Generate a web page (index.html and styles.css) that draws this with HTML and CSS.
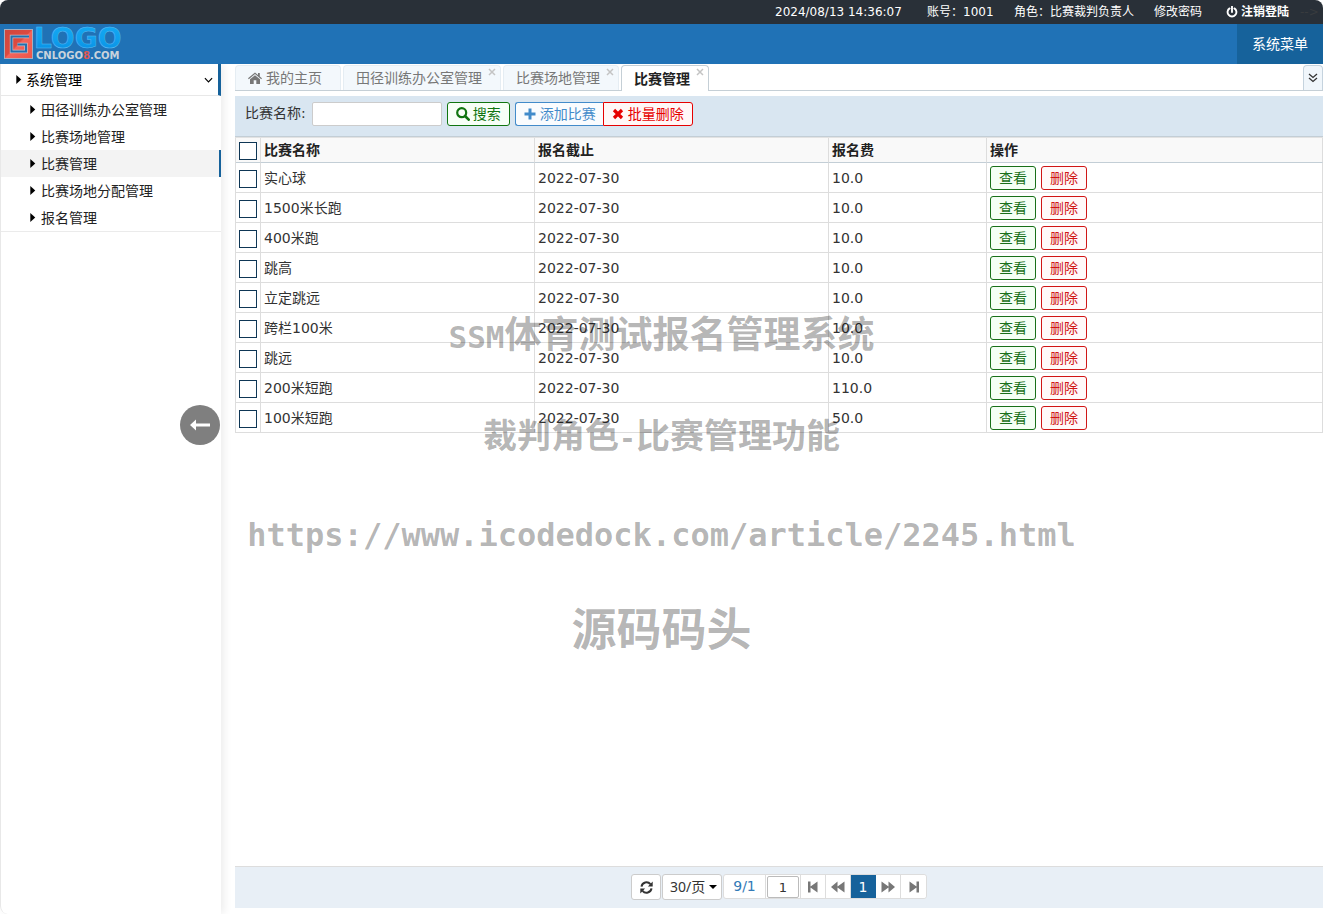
FILE: index.html
```html
<!DOCTYPE html>
<html lang="zh-CN">
<head>
<meta charset="utf-8">
<title>比赛管理</title>
<link rel="stylesheet" href="styles.css">
</head>
<body>
<svg class="defs" aria-hidden="true">
  <symbol id="caret-right" viewBox="0 0 6 10"><path d="M0 0L5.500 5L0 10Z"/></symbol>
  <symbol id="x" viewBox="0 0 8 8"><path d="M1 1L7 7M7 1L1 7" fill="none" stroke="currentColor" stroke-width="1.5"/></symbol>
</svg>
<div class="app">
  <div class="topbar">
    <span class="clock">2024/08/13 14:36:07</span>
    <span class="account">账号：1001</span>
    <span class="role">角色：比赛裁判负责人</span>
    <a class="password" href="#">修改密码</a>
    <a class="logout" href="#"><svg width="12" height="12" viewBox="0 0 12 12"><path d="M3.6 2.4A4.4 4.4 0 1 0 8.4 2.4M6 .6V6" fill="none" stroke="currentColor" stroke-width="1.9" stroke-linecap="round"/></svg>注销登陆</a>
    <span class="stray">--&gt;</span>
  </div>
  <header class="header">
    <svg class="logo" width="126" height="40" viewBox="0 0 126 40" role="img" aria-label="LOGO">
      <defs>
        <linearGradient id="blue" x1="0" y1="0" x2="0" y2="1"><stop offset="0" stop-color="#13a9f2"/><stop offset=".5" stop-color="#10a0ee"/><stop offset="1" stop-color="#078be0"/></linearGradient>
        <linearGradient id="red" x1="0" y1="0" x2="1" y2="1"><stop offset="0" stop-color="#cf463c"/><stop offset=".48" stop-color="#dd4a40"/><stop offset=".52" stop-color="#f4645b"/><stop offset="1" stop-color="#ec5549"/></linearGradient>
      </defs>
      <rect x="4.500" y="5.500" width="28" height="29" fill="url(#red)" stroke="#a4aec0"/>
      <path d="M29 12.500H11.500V27.500H26V20.500H17.500" fill="none" stroke="#c5bcc8" stroke-width="3.400"/>
      <path d="M29 12.500H11.500V27.500H26V20.500H17.500" fill="none" stroke="#2270ae" stroke-width="2"/>
      <text class="logo-name" x="34" y="24">LOGO</text>
      <text class="logo-site" x="36" y="35">CNLOGO<tspan class="logo-eight">8</tspan>.COM</text>
    </svg>
    <button class="system-menu" type="button">系统菜单</button>
  </header>
  <div class="body">
    <nav class="sidebar">
      <a class="group" href="#"><svg class="caret"><use href="#caret-right"/></svg>系统管理<svg class="chevron" width="9" height="6" viewBox="0 0 10 6"><path d="M1 1L5 5L9 1" fill="none" stroke="currentColor" stroke-width="1.300"/></svg></a>
      <ul class="items">
        <li><a href="#"><svg class="caret"><use href="#caret-right"/></svg>田径训练办公室管理</a></li>
        <li><a href="#"><svg class="caret"><use href="#caret-right"/></svg>比赛场地管理</a></li>
        <li><a class="active" href="#"><svg class="caret"><use href="#caret-right"/></svg>比赛管理</a></li>
        <li><a href="#"><svg class="caret"><use href="#caret-right"/></svg>比赛场地分配管理</a></li>
        <li><a href="#"><svg class="caret"><use href="#caret-right"/></svg>报名管理</a></li>
      </ul>
    </nav>
    <main class="main">
      <div class="tabs">
        <a class="tab" href="#"><svg class="home" width="14" height="12" viewBox="0 0 14 12"><path d="M7 .5L0 6.300L.8 7.200L7 2.100L13.200 7.200L14 6.300L11.800 4.400V1H10V2.900ZM7 3.200L2 7.300V12H5.700V8.300H8.300V12H12V7.300Z" fill="currentColor"/></svg>我的主页</a>
        <a class="tab closable" href="#">田径训练办公室管理<svg class="close"><use href="#x"/></svg></a>
        <a class="tab closable" href="#">比赛场地管理<svg class="close"><use href="#x"/></svg></a>
        <a class="tab closable current" href="#">比赛管理<svg class="close"><use href="#x"/></svg></a>
        <button class="more" type="button" aria-label="更多"><svg width="10" height="10" viewBox="0 0 10 10"><path d="M1 1L5 4.500L9 1M1 5L5 8.500L9 5" fill="none" stroke="currentColor" stroke-width="1.300"/></svg></button>
      </div>
      <form class="toolbar">
        <label for="name">比赛名称:</label>
        <input class="name" id="name" type="text">
        <button class="btn search" type="button"><svg width="14" height="14" viewBox="0 0 14 14"><circle cx="5.700" cy="5.700" r="4.500" fill="none" stroke="currentColor" stroke-width="2.200"/><path d="M9 9L12.700 12.700" stroke="currentColor" stroke-width="2.600" stroke-linecap="round"/></svg>搜索</button>
        <div class="joined">
          <button class="btn add" type="button"><svg width="12" height="12" viewBox="0 0 12 12"><path d="M6 .5V11.500M.5 6H11.500" stroke="currentColor" stroke-width="3"/></svg>添加比赛</button>
          <button class="btn remove" type="button"><svg width="12" height="12" viewBox="0 0 12 12"><path d="M2 2L10 10M10 2L2 10" stroke="currentColor" stroke-width="3.200"/></svg>批量删除</button>
        </div>
      </form>
      <table class="grid">
        <colgroup><col class="c-check"><col class="c-name"><col class="c-date"><col class="c-fee"><col></colgroup>
        <thead><tr><th><input type="checkbox" aria-label="全选"></th><th>比赛名称</th><th>报名截止</th><th>报名费</th><th>操作</th></tr></thead>
        <tbody>
          <tr><td><input type="checkbox" aria-label="实心球"></td><td>实心球</td><td>2022-07-30</td><td>10.0</td><td><button class="act view">查看</button><button class="act del">删除</button></td></tr>
          <tr><td><input type="checkbox" aria-label="1500米长跑"></td><td>1500米长跑</td><td>2022-07-30</td><td>10.0</td><td><button class="act view">查看</button><button class="act del">删除</button></td></tr>
          <tr><td><input type="checkbox" aria-label="400米跑"></td><td>400米跑</td><td>2022-07-30</td><td>10.0</td><td><button class="act view">查看</button><button class="act del">删除</button></td></tr>
          <tr><td><input type="checkbox" aria-label="跳高"></td><td>跳高</td><td>2022-07-30</td><td>10.0</td><td><button class="act view">查看</button><button class="act del">删除</button></td></tr>
          <tr><td><input type="checkbox" aria-label="立定跳远"></td><td>立定跳远</td><td>2022-07-30</td><td>10.0</td><td><button class="act view">查看</button><button class="act del">删除</button></td></tr>
          <tr><td><input type="checkbox" aria-label="跨栏100米"></td><td>跨栏100米</td><td>2022-07-30</td><td>10.0</td><td><button class="act view">查看</button><button class="act del">删除</button></td></tr>
          <tr><td><input type="checkbox" aria-label="跳远"></td><td>跳远</td><td>2022-07-30</td><td>10.0</td><td><button class="act view">查看</button><button class="act del">删除</button></td></tr>
          <tr><td><input type="checkbox" aria-label="200米短跑"></td><td>200米短跑</td><td>2022-07-30</td><td>110.0</td><td><button class="act view">查看</button><button class="act del">删除</button></td></tr>
          <tr><td><input type="checkbox" aria-label="100米短跑"></td><td>100米短跑</td><td>2022-07-30</td><td>50.0</td><td><button class="act view">查看</button><button class="act del">删除</button></td></tr>
        </tbody>
      </table>
      <footer class="pager">
        <button class="refresh" type="button" aria-label="刷新"><svg width="13" height="13" viewBox="0 0 13 13"><path d="M1.500 5.600A5 5 0 0 1 10.400 3.200M11.500 7.400A5 5 0 0 1 2.600 9.800" fill="none" stroke="currentColor" stroke-width="2"/><path d="M12.700 .6V5.400H7.900ZM.3 12.400V7.600H5.100Z" fill="currentColor"/></svg></button>
        <div class="size"><select aria-label="每页条数"><option>30/页</option></select><svg class="down" width="8" height="4" viewBox="0 0 8 4"><path d="M0 0H8L4 4Z"/></svg></div>
        <div class="pages">
          <span class="total">9/1</span>
          <span class="jump"><input type="text" value="1" aria-label="页码"></span>
          <button type="button" aria-label="首页"><svg width="10" height="12" viewBox="0 0 10 12"><path d="M0 .5H2.500V5.500L9.500 .5V11.500L2.500 6.500V11.500H0Z"/></svg></button>
          <button type="button" aria-label="上一页"><svg width="14" height="12" viewBox="0 0 14 12"><path d="M0 6L6.500 .5V5.500L13.500 .5V11.500L6.500 6.500V11.500Z"/></svg></button>
          <button class="on" type="button">1</button>
          <button type="button" aria-label="下一页"><svg width="14" height="12" viewBox="0 0 14 12"><path d="M14 6L7.500 .5V5.500L.5 .5V11.500L7.500 6.500V11.500Z"/></svg></button>
          <button type="button" aria-label="末页"><svg width="10" height="12" viewBox="0 0 10 12"><path d="M10 .5H7.500V5.500L.5 .5V11.500L7.500 6.500V11.500H10Z"/></svg></button>
        </div>
      </footer>
    </main>
  </div>
  <button class="collapse" type="button" aria-label="收起菜单"><svg width="20" height="12" viewBox="0 0 20 12"><path d="M0 6L6 .5V4.500H20V7.500H6V11.500Z" fill="#fff"/></svg></button>
  <div class="watermark">
    <p class="wm-title"><span>SSM</span>体育测试报名管理系统</p>
    <p class="wm-sub">裁判角色<span>-</span>比赛管理功能</p>
    <p class="wm-url">https://www.icodedock.com/article/2245.html</p>
    <p class="wm-site">源码码头</p>
  </div>
</div>
</body>
</html>
```
FILE: styles.css
```css
* { box-sizing: border-box; }
body { margin: 0; background: #fff; color: #333; font: 14px/20px "DejaVu Sans", "Noto Sans CJK SC", sans-serif; }
button, input, select { font: inherit; color: inherit; margin: 0; padding: 0; }
button { cursor: pointer; }
a { color: inherit; text-decoration: none; }
svg { flex: none; }
.defs { display: none; }

.app { position: relative; display: flex; flex-direction: column; min-height: 100vh; }

.topbar { display: flex; justify-content: flex-end; height: 24px; padding-right: 2px; background: #293038; color: #fff; font-size: 12px; line-height: 24px; border-radius: 8px 8px 0 0; white-space: nowrap; }
.clock { width: 152px; }
.account { width: 87px; }
.role { width: 140px; }
.password { width: 72px; }
.logout { display: flex; align-items: center; gap: 3px; width: 74px; font-weight: bold; }
.stray { width: 21px; color: #383b3e; }

.header { position: relative; z-index: 1; display: flex; justify-content: space-between; height: 40px; background: #2072b6; }
.logo-name { font: bold 28px "DejaVu Sans", sans-serif; fill: url(#blue); stroke: #5cbcf4; stroke-width: .5px; }
.logo-site { font: bold 10px "DejaVu Sans", sans-serif; fill: #c9d3dc; }
.logo-eight { fill: #e0584f; }
.system-menu { width: 86px; border: 0; background: #16629b; color: #fff; }

.body { flex: 1; display: flex; }
.sidebar { width: 221px; flex: none; border-left: 1px solid #e8e8e8; border-bottom-left-radius: 8px; box-shadow: 3px 0 8px #ededed; color: #222; }
.sidebar a { display: flex; align-items: center; }
.caret { width: 6px; height: 9px; margin-right: 5px; }
.group { height: 32px; padding-left: 15px; color: #000; border-bottom: 1px solid #e8e8e8; border-right: 3px solid #16629b; }
.group .caret { margin-right: 4px; }
.chevron { margin: 0 5px 0 auto; }
.items { margin: 0; padding: 0; list-style: none; border-bottom: 1px solid #ebebeb; }
.items a { height: 27px; padding-left: 29px; }
.items .active { background: #f3f3f3; border-right: 2px solid #16629b; }

.main { flex: 1; min-width: 0; display: flex; flex-direction: column; margin-left: 14px; padding-bottom: 6px; }
.tabs { display: flex; gap: 2px; height: 27px; margin-bottom: 5px; padding-top: 1px; border-bottom: 1px solid #c5cfd6; }
.tab { position: relative; display: flex; align-items: center; height: 25px; padding: 0 18px 0 12px; border: 1px solid #e5edf3; border-bottom: 0; border-radius: 4px 4px 0 0; background: #f3f8fc; color: #777; }
.home { margin-right: 4px; }
.close { position: absolute; top: 2px; right: 4px; width: 8px; height: 8px; color: #c4c4c4; }
.current { height: 26px; background: #fff; border-color: #c5cfd6; color: #222; font-weight: bold; }
.more { display: flex; align-items: center; justify-content: center; width: 20px; height: 25px; margin-left: auto; border: 1px solid #c5d3de; border-bottom: 0; border-radius: 4px 4px 0 0; background: #f0f6fb; color: #333; }

.toolbar { display: flex; align-items: flex-start; gap: 5px; height: 41px; padding: 6px 10px; background: #d9e6f1; border-bottom: 1px solid #c3ced6; line-height: 22px; }
.name { width: 130px; height: 24px; margin-left: 1px; border: 1px solid #ccc; border-radius: 2px; background: #fff; }
.btn { display: flex; align-items: center; gap: 4px; height: 24px; padding: 0 8px; border: 1px solid; border-radius: 3px; background: #fafcfe; line-height: 22px; }
.search { gap: 3px; color: #107510; background: #f7fff7; }
.add { padding-right: 7px; color: #428bca; border-radius: 3px 0 0 3px; border-right: 0; }
.remove { color: #e60000; background: #fff7f7; border-radius: 0 3px 3px 0; }
.joined { display: flex; }

.grid { width: 100%; table-layout: fixed; border-collapse: separate; border-spacing: 0; border-left: 1px solid #ddd; border-top: 1px solid #e2e2e2; }
.c-check { width: 25px; }
.c-name { width: 274px; }
.c-date { width: 294px; }
.c-fee { width: 158px; }
.grid th, .grid td { height: 30px; padding: 0 3px; border-right: 1px solid #ddd; border-bottom: 1px solid #ddd; text-align: left; vertical-align: middle; }
.grid th { height: 25px; background: #f9f9f9; border-bottom-color: #c3ced6; color: #222; }
.grid input { display: block; appearance: none; width: 18px; height: 18px; margin-top: 2px; border: 1px solid #0e3655; background: #fff; }
.act { height: 24px; width: 46px; margin-right: 5px; border: 1px solid; border-radius: 3px; line-height: 20px; vertical-align: middle; }
.view { color: #187018; background: #f4fff4; }
.del { color: #d01515; background: #fff8f8; }

.pager { display: flex; justify-content: center; gap: 1px; height: 42px; margin-top: auto; padding: 7px 0; border-top: 1px solid #ddd; background: #e8eff6; }
.refresh { display: flex; align-items: center; justify-content: center; width: 30px; height: 26px; border: 1px solid #ccc; border-radius: 3px; background: #fff; }
.size { position: relative; }
.size select { appearance: none; width: 60px; height: 26px; padding-left: 7px; border: 1px solid #ccc; border-radius: 3px; background: #fff; font-family: "Noto Sans", "Noto Sans CJK SC", sans-serif; }
.down { position: absolute; right: 5px; top: 11px; }
.pages { display: flex; height: 25px; border: 1px solid #ddd; border-radius: 3px; background: #fff; }
.total { width: 41px; text-align: center; color: #337ab7; line-height: 23px; }
.jump { width: 36px; padding: 1px; border: 1px solid #ddd; border-width: 0 1px; }
.jump input { display: block; width: 32px; height: 22px; border: 1px solid #bbb; border-radius: 2px; text-align: center; font-size: 13px; }
.pages button { display: flex; align-items: center; justify-content: center; width: 25px; border: 0; border-right: 1px solid #ddd; background: #fff; fill: #777; }
.pages button:last-child { border-right: 0; border-radius: 3px; }
.pages .on { background: #16629b; color: #fff; border-color: #16629b; }

.collapse { position: absolute; left: 180px; top: 405px; width: 40px; height: 40px; display: flex; align-items: center; justify-content: center; border: 0; border-radius: 50%; background: #7f7f7f; }

.watermark { position: absolute; left: 0; right: 0; top: 306px; text-align: center; font-family: "Noto Sans CJK SC", sans-serif; font-weight: bold; color: rgba(0, 0, 0, .3); pointer-events: none; }
.watermark p { margin: 0; }
.watermark span { font-family: "DejaVu Sans Mono", monospace; }
.wm-title { font-size: 37px; line-height: 52px; }
.wm-title span { font-size: 31px; }
.wm-sub { font-size: 34px; line-height: 48px; padding-top: 47px; }
.wm-sub span { font-size: 28px; }
.wm-url { font-family: "DejaVu Sans Mono", monospace; font-size: 32px; line-height: 48px; padding-top: 48px; }
.wm-site { font-size: 45px; line-height: 60px; padding-top: 38px; }
```
